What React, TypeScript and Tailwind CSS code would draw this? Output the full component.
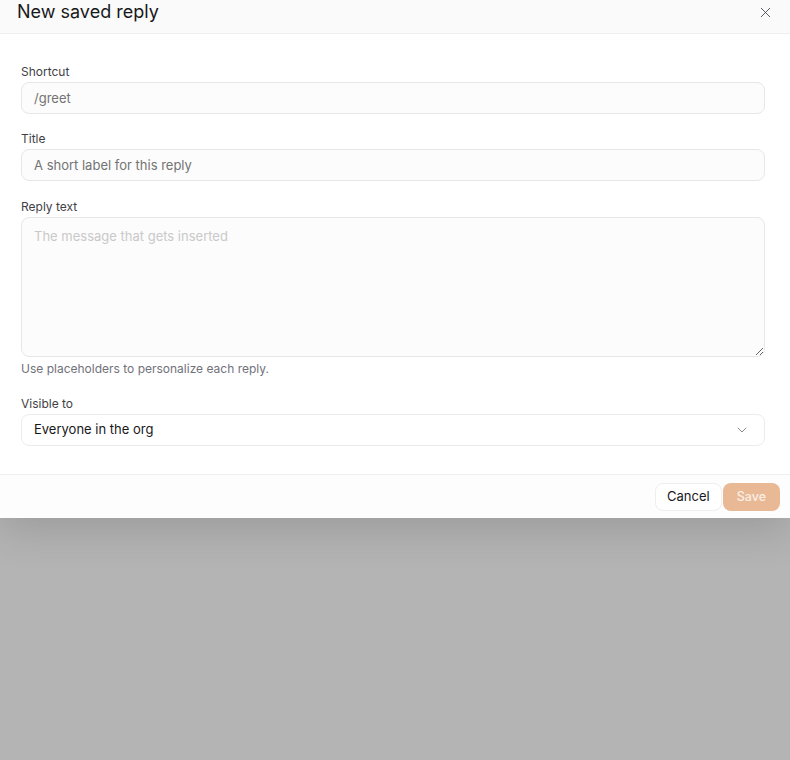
import React from 'react'
import { ChevronDown, X } from 'lucide-react'

const Field = ({ label, children }: { label: string; children: React.ReactNode }) => {
    return (
        <div className="flex flex-col">
            <label className="text-[12px] leading-4 font-normal text-[#3f3f46] mb-[2px]">{label}</label>
            {children}
        </div>
    )
}

const App = () => {
    return (
        <div className="h-[760px] w-full bg-[#b4b4b4] overflow-hidden" style={{ fontFamily: 'Inter, "Noto Sans", sans-serif' }}>
            <div className="w-full bg-white shadow-[0_12px_40px_rgba(0,0,0,0.14)]">
                {/* header */}
                <div className="h-[34px] px-[17px] flex items-start justify-between bg-[#fafafa] border-b border-[#efefef]">
                    <h2 className="mt-[1px] text-[18px] leading-[22px] font-normal text-[#18181b]">New saved reply</h2>
                    <button className="mt-[4px] mr-[-1px] text-[#3f3f46]">
                        <X size={17} strokeWidth={1.2} />
                    </button>
                </div>

                {/* body */}
                <div className="pl-[21px] pr-[25px] pt-[30px] pb-[28px] flex flex-col">
                    <Field label="Shortcut">
                        <input
                            className="h-8 w-full rounded-lg border border-[#e7e7e7] bg-[#fcfcfc] px-3 text-[13px] text-[#18181b] placeholder:text-[#737373] outline-none"
                            placeholder="/greet"
                        />
                    </Field>
                    <div className="mt-[17px]">
                        <Field label="Title">
                            <input
                                className="h-8 w-full rounded-lg border border-[#e7e7e7] bg-[#fcfcfc] px-3 text-[13px] text-[#18181b] placeholder:text-[#737373] outline-none"
                                placeholder="A short label for this reply"
                            />
                        </Field>
                    </div>
                    <div className="mt-[18px]">
                        <Field label="Reply text">
                            <textarea
                                className="h-[140px] w-full rounded-lg border border-[#e7e7e7] bg-[#fcfcfc] px-3 py-[9px] text-[13px] leading-[18px] text-[#18181b] placeholder:text-[#c9c9c9] outline-none resize-y"
                                placeholder="The message that gets inserted"
                            />
                        </Field>
                        <p className="mt-[4px] text-[12px] leading-4 text-[#71717a]">Use placeholders to personalize each reply.</p>
                    </div>
                    <div className="mt-[19px]">
                        <Field label="Visible to">
                            <div className="h-8 w-full rounded-lg border border-[#ececec] bg-white pl-3 pr-[14px] flex items-center justify-between">
                                <span className="text-[13px] text-[#18181b]">Everyone in the org</span>
                                <ChevronDown size={16} strokeWidth={1.25} className="text-[#737373]" />
                            </div>
                        </Field>
                    </div>
                </div>

                {/* footer */}
                <div className="h-[44px] border-t border-[#f0f0f0] bg-[#fdfdfd] pr-[10px] pt-px flex items-center justify-end gap-px">
                    <button className="h-7 px-[11px] rounded-lg border border-[#eeeeee] bg-white text-[13px] text-[#18181b]">Cancel</button>
                    <button className="h-7 px-[14px] rounded-lg bg-[#e9b996] text-[12.5px] font-medium text-[#fbeee4]">Save</button>
                </div>
            </div>
        </div>
    )
}

export default App
